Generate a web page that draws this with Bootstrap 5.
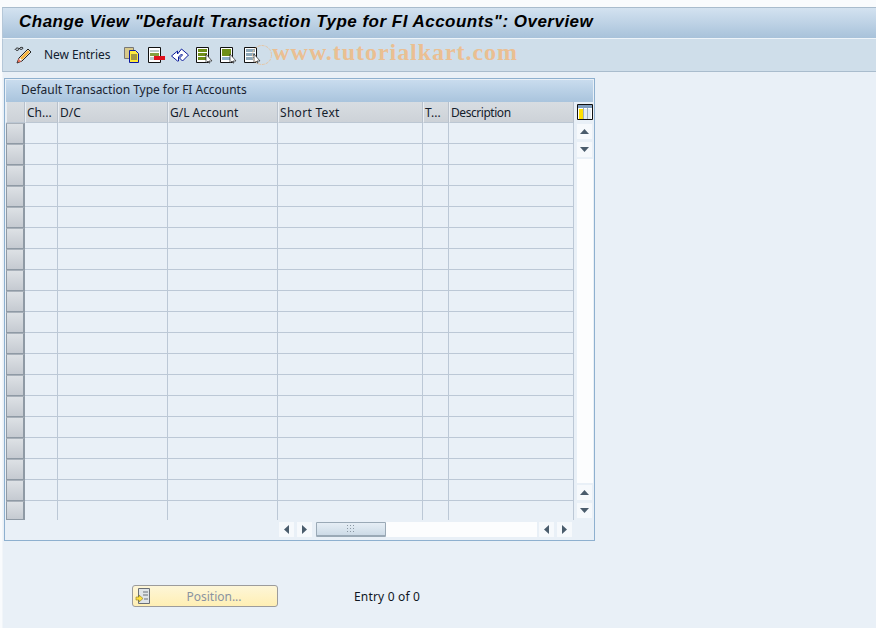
<!DOCTYPE html>
<html lang="en">
<head>
<meta charset="utf-8">
<title>Change View</title>
<link href="https://cdn.jsdelivr.net/npm/bootstrap@5.3.0/dist/css/bootstrap.min.css" rel="stylesheet">
<style>
html,body{height:100%}
body{background:#f9fbfd;font-family:"Noto Sans",sans-serif;font-size:12px;color:#101828;overflow:hidden}
.sap-shell{width:876px;height:628px;padding:7px 0 0 2px}
.sap-title{height:31px;border-top:1px solid #a9bccd;border-left:1px solid #b5c7d8;background:linear-gradient(#d3e2f0,#a8c2da);padding:0 0 2px 16px;font:italic bold 17px "Liberation Sans",sans-serif;letter-spacing:.49px;color:#000;white-space:nowrap}
.sap-tools{height:34px;border-top:1px solid #eef4f9;border-bottom:1px solid #a9bccd;border-left:1px solid #b5c7d8;background:#cfdeea;padding-left:11px}
.sap-new{margin:0 13px 0 12px;font-size:12px;letter-spacing:-.08px;color:#10202f}
.sap-ico{width:18px;height:18px;display:block;flex:none}
.sap-mark{font:bold 24px "Liberation Serif",serif;color:#eabf92;letter-spacing:.95px;line-height:1;margin:-6px 0 0 11px;white-space:nowrap}
.sap-ring{position:absolute;left:8px;top:-2px}
.sap-wrap{position:relative;flex:none}
.sap-body{height:557px;background:#e9f0f7;border-left:1px solid #f1f5f9;padding:6px 0 0 1px;position:relative}
.sap-box{width:591px;height:463px;border:1px solid #8eb0cf;padding:1px 1px 0 1px}
.sap-cap{height:22px;background:linear-gradient(#c9dcee,#a9c4dd);padding-left:15px;line-height:20px;color:#1a2430;letter-spacing:-.03px}
.sap-cols{height:417px}
.sap-gridtb{table-layout:fixed;width:568px;border-collapse:separate;border-spacing:0}
.sap-gridtb th.hc{height:21px;background:linear-gradient(#d8dde2,#cdd2d8);border-left:1px solid #e9eef3;border-right:1px solid #b8c1cc;border-bottom:1px solid #bcc7d3;font-weight:400;padding:2px 0 0 1px;white-space:nowrap;overflow:hidden;color:#14202c;line-height:18px}
.sap-gridtb th.sap-wide{letter-spacing:.3px}
.sap-gridtb th.sap-tight{letter-spacing:-.45px}
.sap-gridtb th.sel{width:19px;padding:0;background:none;border:0}
.sap-selbox{display:block;height:21px;background:linear-gradient(#dde1e5,#c5cad1);border:1px solid #8f9aa5;border-right-width:2px;border-top-color:#aab2bb;width:19px}
.sap-gridtb td{height:21px;padding:0;border-right:1px solid #bcc8d6;border-bottom:1px solid #bcc8d6}
.sap-gridtb tr:last-child td{border-bottom:0;height:18px}
.sap-gridtb tr:last-child .sap-selbox{height:19px}
.sap-vbar{width:17px;margin-left:2px;padding:2px 0 1px 1px}
.sap-cfg{height:20px}
.sap-btn{width:15px;height:15px;background:#f6f9fc;display:flex;align-items:center;justify-content:center;flex:none}
.sap-btn-gap{margin-top:3px}
.sap-btn-gapx{margin-left:3px}
.sap-track{background:#fcfdfe}
.sap-trackv{margin:2px 0}
.sap-trackh{margin:0 2px 0 4px}
.sap-hbar{height:15px;margin:3px 0 0 273px;width:293px}
.sap-thumb{width:70px;height:15px;background:linear-gradient(#e6eef5,#cddbe7);border:1px solid #9aa9b6;border-bottom-width:2px;border-radius:1px}
.sap-foot{padding:44px 0 0 128px}
.sap-pos{width:146px;height:22px;background:linear-gradient(#fdf6d8,#ffefb4);border:1px solid #9c9c9c;border-radius:3px;color:#8b93a0;padding:0 0 0 2px;line-height:20px}
.sap-postxt{flex:1;text-align:center;padding-top:2px}
.sap-entry{margin-left:76px;color:#10161f;letter-spacing:.18px;padding-top:2px}
</style>
</head>
<body>
<div class="sap-shell d-flex flex-column">
  <div class="sap-title d-flex align-items-center">Change View "Default Transaction Type for FI Accounts": Overview</div>
  <div class="sap-tools d-flex align-items-center">
    <svg class="sap-ico" viewBox="0 0 18 18"><path d="M1 4c1-3 4-2 4-1s-2 2-3 1m3-1c1-2 4-2 4-1s-2 2-3 1" fill="none" stroke="#222" stroke-width="1"/><path d="M14 3l3 3-9 9-5 2 2-5z" fill="#fff" stroke="#222"/><path d="M14 4l2 2-8 8-2-2z" fill="#f3b23c"/><path d="M3.500 16.500l1-4 3 3z" fill="#e8705a"/></svg>
    <span class="sap-new">New Entries</span>
    <div class="d-flex align-items-center gap-1">
      <svg class="sap-ico" viewBox="0 0 18 18"><path d="M1.500 1.500h9v11h-9z" fill="#d8c98a" stroke="#777"/><path d="M6.500 4.500h6l3 3v9h-9z" fill="#ffe93c" stroke="#0a16a0"/><path d="M8 9h6M8 11h6M8 13h6" stroke="#444"/></svg>
      <svg class="sap-ico" style="margin-left:2px" viewBox="0 0 18 18"><path d="M1.500 1.500h12v15h-12z" fill="#fff" stroke="#111"/><path d="M3 4h9v2H3z" fill="#b9c8c8"/><path d="M3 7h9v3H3z" fill="#84a040"/><path d="M3 11h6v3H3z" fill="#b9c8c8"/><path d="M7 10h11v4H7z" fill="#e0101c"/></svg>
      <svg class="sap-ico" style="margin-left:2px" viewBox="0 0 18 18"><path d="M.500 10l6-5v3l4-5 7 6-6 6-3-3 3-3-1-1-3 3v4h-1z" fill="#fff" stroke="#0a1a9a"/></svg>
      <svg class="sap-ico" style="margin-left:2px" viewBox="0 0 18 18"><path d="M1.500 1.500h12v15h-12z" fill="#fff" stroke="#111"/><path d="M3 3h9v3H3zM3 7h9v3H3zM3 11h9v3H3z" fill="#6f8f18"/><path d="M11 8v9l2-2 1 2h1l-1-2h3z" fill="#fff" stroke="#222" stroke-width=".7"/></svg>
      <svg class="sap-ico" style="margin-left:2px" viewBox="0 0 18 18"><path d="M1.500 1.500h12v15h-12z" fill="#fff" stroke="#111"/><path d="M3 3h9v7H3z" fill="#6f8f18"/><path d="M3 11h9v3H3z" fill="#8fb0c8"/><path d="M11 8v9l2-2 1 2h1l-1-2h3z" fill="#fff" stroke="#222" stroke-width=".7"/></svg>
      <div class="sap-wrap" style="margin-left:2px">
        <svg class="sap-ico" viewBox="0 0 18 18"><path d="M1.500 1.500h12v15h-12z" fill="#fff" stroke="#111"/><path d="M3 3h9v3H3zM3 7h9v3H3zM3 11h9v3H3z" fill="#8ea8b8"/><path d="M11 8v9l2-2 1 2h1l-1-2h3z" fill="#fff" stroke="#222" stroke-width=".7"/></svg>
        <svg class="sap-ring" width="22" height="22" viewBox="0 0 22 22"><circle cx="11" cy="11" r="9.500" fill="none" stroke="#e6c6a4" stroke-width="1" stroke-dasharray="3 1"/></svg>
      </div>
    </div>
    <span class="sap-mark">www.tutorialkart.com</span>
  </div>
  <div class="sap-body">
    <div class="sap-box d-flex flex-column">
      <div class="sap-cap">Default Transaction Type for FI Accounts</div>
      <div class="sap-cols d-flex">
        <table class="sap-gridtb">
          <colgroup><col style="width:19px"><col style="width:33px"><col style="width:110px"><col style="width:110px"><col style="width:145px"><col style="width:26px"><col style="width:125px"></colgroup>
          <thead><tr><th class="hc"></th><th class="hc">Ch...</th><th class="hc">D/C</th><th class="hc">G/L Account</th><th class="hc sap-wide">Short Text</th><th class="hc">T...</th><th class="hc sap-tight">Description</th></tr></thead>
          <tbody>
            <tr><th class="sel"><span class="sap-selbox"></span></th><td></td><td></td><td></td><td></td><td></td><td></td></tr>
            <tr><th class="sel"><span class="sap-selbox"></span></th><td></td><td></td><td></td><td></td><td></td><td></td></tr>
            <tr><th class="sel"><span class="sap-selbox"></span></th><td></td><td></td><td></td><td></td><td></td><td></td></tr>
            <tr><th class="sel"><span class="sap-selbox"></span></th><td></td><td></td><td></td><td></td><td></td><td></td></tr>
            <tr><th class="sel"><span class="sap-selbox"></span></th><td></td><td></td><td></td><td></td><td></td><td></td></tr>
            <tr><th class="sel"><span class="sap-selbox"></span></th><td></td><td></td><td></td><td></td><td></td><td></td></tr>
            <tr><th class="sel"><span class="sap-selbox"></span></th><td></td><td></td><td></td><td></td><td></td><td></td></tr>
            <tr><th class="sel"><span class="sap-selbox"></span></th><td></td><td></td><td></td><td></td><td></td><td></td></tr>
            <tr><th class="sel"><span class="sap-selbox"></span></th><td></td><td></td><td></td><td></td><td></td><td></td></tr>
            <tr><th class="sel"><span class="sap-selbox"></span></th><td></td><td></td><td></td><td></td><td></td><td></td></tr>
            <tr><th class="sel"><span class="sap-selbox"></span></th><td></td><td></td><td></td><td></td><td></td><td></td></tr>
            <tr><th class="sel"><span class="sap-selbox"></span></th><td></td><td></td><td></td><td></td><td></td><td></td></tr>
            <tr><th class="sel"><span class="sap-selbox"></span></th><td></td><td></td><td></td><td></td><td></td><td></td></tr>
            <tr><th class="sel"><span class="sap-selbox"></span></th><td></td><td></td><td></td><td></td><td></td><td></td></tr>
            <tr><th class="sel"><span class="sap-selbox"></span></th><td></td><td></td><td></td><td></td><td></td><td></td></tr>
            <tr><th class="sel"><span class="sap-selbox"></span></th><td></td><td></td><td></td><td></td><td></td><td></td></tr>
            <tr><th class="sel"><span class="sap-selbox"></span></th><td></td><td></td><td></td><td></td><td></td><td></td></tr>
            <tr><th class="sel"><span class="sap-selbox"></span></th><td></td><td></td><td></td><td></td><td></td><td></td></tr>
            <tr><th class="sel"><span class="sap-selbox"></span></th><td></td><td></td><td></td><td></td><td></td><td></td></tr>
          </tbody>
        </table>
        <div class="sap-vbar d-flex flex-column">
          <div class="sap-cfg"><svg width="16" height="16" viewBox="0 0 16 16" class="d-block"><path d="M.500.500h15v15H.500z" fill="#fff" stroke="#111"/><path d="M1 1h14v3H1z" fill="#7f9dbd"/><path d="M2 5h4v10H2z" fill="#ffe000"/><path d="M7 5h3v10H7zM11 5h3v10h-3z" fill="#e4edf4"/><path d="M6.500 4v11M10.500 4v11" stroke="#9fb0c0"/></svg></div>
          <div class="sap-btn"><svg width="9" height="5" viewBox="0 0 9 5"><path d="M0 5l4.500-5L9 5z" fill="#4a5c6c"/></svg></div>
          <div class="sap-btn sap-btn-gap"><svg width="9" height="5" viewBox="0 0 9 5"><path d="M0 0l4.500 5L9 0z" fill="#4a5c6c"/></svg></div>
          <div class="sap-track sap-trackv flex-grow-1"></div>
          <div class="sap-btn"><svg width="9" height="5" viewBox="0 0 9 5"><path d="M0 5l4.500-5L9 5z" fill="#4a5c6c"/></svg></div>
          <div class="sap-btn sap-btn-gap"><svg width="9" height="5" viewBox="0 0 9 5"><path d="M0 0l4.500 5L9 0z" fill="#4a5c6c"/></svg></div>
        </div>
      </div>
      <div class="sap-hbar d-flex">
        <div class="sap-btn"><svg width="5" height="9" viewBox="0 0 5 9"><path d="M5 0L0 4.500 5 9z" fill="#4a5c6c"/></svg></div>
        <div class="sap-btn sap-btn-gapx"><svg width="5" height="9" viewBox="0 0 5 9"><path d="M0 0l5 4.500L0 9z" fill="#4a5c6c"/></svg></div>
        <div class="sap-track sap-trackh flex-grow-1 d-flex">
          <div class="sap-thumb d-flex align-items-center justify-content-center"><svg width="8" height="7" viewBox="0 0 8 7" class="d-block"><path d="M0 0h1v1H0zM3 0h1v1H3zM6 0h1v1H6zM0 3h1v1H0zM3 3h1v1H3zM6 3h1v1H6zM0 6h1v1H0zM3 6h1v1H3zM6 6h1v1H6z" fill="#8a97a3"/></svg></div>
        </div>
        <div class="sap-btn"><svg width="5" height="9" viewBox="0 0 5 9"><path d="M5 0L0 4.500 5 9z" fill="#4a5c6c"/></svg></div>
        <div class="sap-btn sap-btn-gapx"><svg width="5" height="9" viewBox="0 0 5 9"><path d="M0 0l5 4.500L0 9z" fill="#4a5c6c"/></svg></div>
      </div>
    </div>
    <div class="sap-foot d-flex align-items-center">
      <div class="sap-pos d-flex align-items-center">
        <svg width="16" height="18" viewBox="0 0 16 18" class="d-block"><path d="M3.500 1.500h11v15h-11z" fill="#dfe4e8" stroke="#6a6f75"/><path d="M8 5h5M8 8h5M9 12h4" stroke="#6a7078"/><path d="M1 10h3V8l4 3.500L4 15v-2H1z" fill="#ffe040" stroke="#8a7a20" stroke-width=".6"/></svg>
        <span class="sap-postxt">Position...</span>
      </div>
      <span class="sap-entry">Entry 0 of 0</span>
    </div>
  </div>
</div>
<script src="https://cdn.jsdelivr.net/npm/bootstrap@5.3.0/dist/js/bootstrap.bundle.min.js"></script>
</body>
</html>
